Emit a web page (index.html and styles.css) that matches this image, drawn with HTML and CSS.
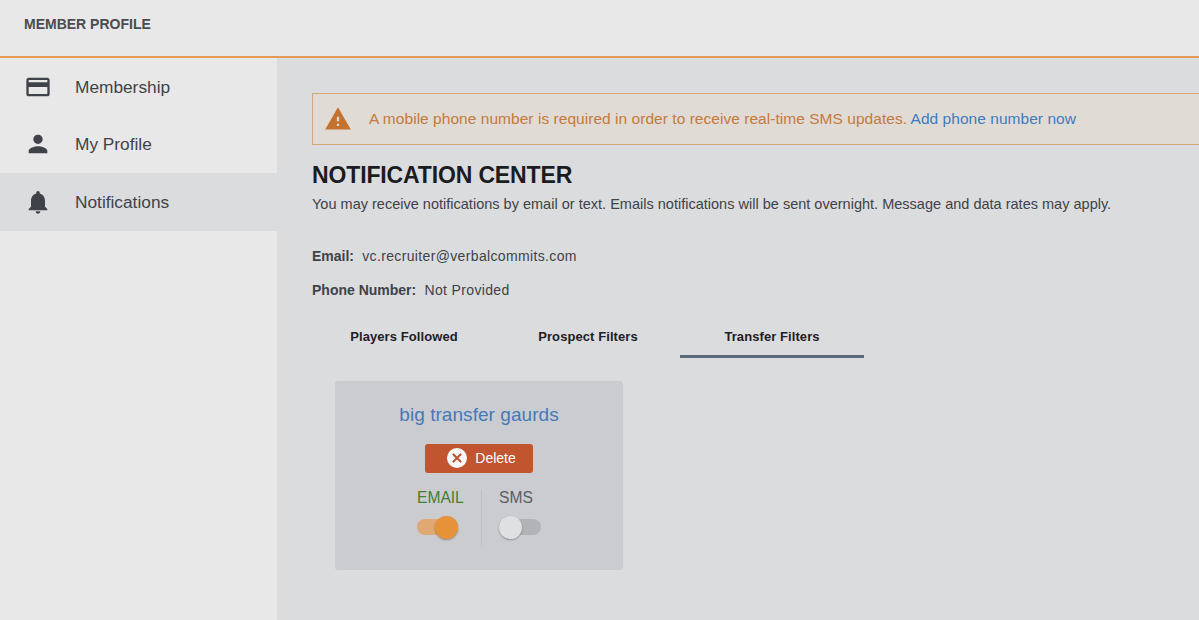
FILE: index.html
```html
<!DOCTYPE html>
<html lang="en">
<head>
  <meta charset="UTF-8">
  <title>Member Profile</title>
  <link rel="stylesheet" href="styles.css">
</head>
<body>
  <header class="topbar">MEMBER PROFILE</header>
  <div class="layout">
    <nav class="sidebar">
      <a class="nav-item">
        <svg class="nav-icon" viewBox="0 0 24 24"><path d="M20 4H4c-1.11 0-1.99.89-1.99 2L2 18c0 1.11.89 2 2 2h16c1.11 0 2-.89 2-2V6c0-1.11-.89-2-2-2zm0 14H4v-6h16v6zm0-10H4V6h16v2z"/></svg>
        <span class="nav-label">Membership</span>
      </a>
      <a class="nav-item">
        <svg class="nav-icon" viewBox="0 0 24 24"><path d="M12 12c2.21 0 4-1.79 4-4s-1.79-4-4-4-4 1.79-4 4 1.79 4 4 4zm0 2c-2.67 0-8 1.34-8 4v2h16v-2c0-2.66-5.33-4-8-4z"/></svg>
        <span class="nav-label">My Profile</span>
      </a>
      <a class="nav-item active">
        <svg class="nav-icon" viewBox="0 0 24 24"><path d="M12 22c1.1 0 2-.9 2-2h-4c0 1.1.9 2 2 2zm6-6v-5c0-3.07-1.63-5.64-4.5-6.32V4c0-.83-.67-1.5-1.5-1.5s-1.5.67-1.5 1.5v.68C7.64 5.36 6 7.92 6 11v5l-2 2v1h16v-1l-2-2z"/></svg>
        <span class="nav-label">Notifications</span>
      </a>
    </nav>

    <main class="content">
      <div class="alert">
        <svg class="alert-icon" viewBox="0 0 24 24"><path d="M1 21h22L12 2 1 21zm12-3h-2v-2h2v2zm0-4h-2v-4h2v4z"/></svg>
        <span>A mobile phone number is required in order to receive real-time SMS updates. <a class="link">Add phone number now</a></span>
      </div>

      <h1>NOTIFICATION CENTER</h1>
      <p class="intro">You may receive notifications by email or text. Emails notifications will be sent overnight. Message and data rates may apply.</p>

      <div class="contact"><strong>Email:</strong> vc.recruiter@verbalcommits.com</div>
      <div class="contact"><strong>Phone Number:</strong> Not Provided</div>

      <div class="tabs">
        <div class="tab">Players Followed</div>
        <div class="tab">Prospect Filters</div>
        <div class="tab selected">Transfer Filters</div>
      </div>

      <div class="card">
        <div class="card-title">big transfer gaurds</div>
        <button class="delete">
          <svg class="delete-icon" viewBox="0 0 20 20"><circle cx="10" cy="10" r="10" fill="#fff"/><path d="M6.5 6.5l7 7M13.5 6.5l-7 7" stroke="#c0532f" stroke-width="2.2" stroke-linecap="round"/></svg>
          Delete
        </button>
        <div class="channels">
          <div class="channel on">
            <span class="channel-label">EMAIL</span>
            <span class="switch"><span class="knob"></span></span>
          </div>
          <div class="channel">
            <span class="channel-label">SMS</span>
            <span class="switch"><span class="knob"></span></span>
          </div>
        </div>
      </div>
    </main>
  </div>
</body>
</html>
```

FILE: styles.css
```css
html, body {
  margin: 0;
  height: 100%;
  overflow: hidden;
}
body {
  font-family: "Liberation Sans", Arial, sans-serif;
  background: #dbdcde;
  color: #3f4247;
}
.topbar {
  height: 56px;
  background: #e8e8e8;
  border-bottom: 2px solid #e59a57;
  padding-left: 24px;
  line-height: 49px;
  font-size: 14px;
  font-weight: bold;
  color: #4a4c50;
}
.layout {
  display: flex;
  height: 562px;
}
.sidebar {
  width: 277px;
  flex-shrink: 0;
  background: #e8e8e8;
}
.nav-item {
  display: flex;
  align-items: center;
  height: 57.5px;
  padding-left: 24px;
  font-size: 17.3px;
  color: #3f4349;
}
.nav-item.active {
  background: #dbdcde;
}
.nav-icon {
  width: 28px;
  height: 28px;
  margin-right: 23px;
  fill: #3f4349;
}
.nav-label {
  padding-top: 1px;
}
.content {
  flex: 1;
  min-width: 0;
  padding: 35px 0 0 35px;
}
.alert {
  display: flex;
  align-items: center;
  width: 920px;
  height: 50px;
  border: 1px solid #d6a67c;
  background: #e0dbd5;
  color: #c47a3c;
  font-size: 15.5px;
  letter-spacing: 0.04px;
  white-space: nowrap;
}
.alert-icon {
  width: 28px;
  height: 28px;
  margin: 0 17px 0 11px;
  fill: #c4722f;
}
.link {
  color: #3f7cc0;
}
h1 {
  margin: 15px 0 0;
  font-size: 23px;
  line-height: 30px;
  color: #1b1c1f;
  letter-spacing: -0.14px;
}
.intro {
  margin: 4px 0 0;
  font-size: 14.5px;
  line-height: 20px;
  letter-spacing: 0.01px;
  white-space: nowrap;
}
.contact {
  font-size: 14px;
  line-height: 20px;
  letter-spacing: 0.35px;
  margin-top: 14px;
}
.intro + .contact {
  margin-top: 32px;
}
.contact strong {
  margin-right: 4px;
  letter-spacing: 0;
}
.tabs {
  display: flex;
  margin-top: 21px;
  width: 552px;
}
.tab {
  width: 184px;
  height: 37px;
  box-sizing: border-box;
  padding-top: 7px;
  text-align: center;
  font-size: 13px;
  line-height: 18px;
  font-weight: bold;
  letter-spacing: 0.08px;
  color: #1f2024;
}
.tab.selected {
  border-bottom: 3px solid #5b6b7c;
}
.card {
  width: 288px;
  height: 189px;
  margin: 23px 0 0 23px;
  padding-top: 22px;
  box-sizing: border-box;
  background: #cbccd0;
  border-radius: 3px;
  text-align: center;
}
.card-title {
  font-size: 19px;
  line-height: 24px;
  letter-spacing: 0.05px;
  color: #4579ba;
}
.delete {
  display: inline-flex;
  align-items: center;
  justify-content: center;
  width: 108px;
  height: 29px;
  margin-top: 17px;
  padding: 0 0 1px 5px;
  border: 0;
  border-radius: 3px;
  background: #c0552f;
  color: #fff;
  font-family: inherit;
  font-size: 14px;
}
.delete-icon {
  width: 20px;
  height: 20px;
  margin-right: 8px;
}
.channels {
  display: flex;
  justify-content: center;
  margin-top: 17px;
}
.channel {
  display: flex;
  flex-direction: column;
  align-items: flex-start;
  width: 64px;
  height: 57px;
}
.channel:last-child {
  width: 42px;
  padding-left: 17px;
  border-left: 1px solid #bfc0c4;
}
.channel-label {
  font-size: 15.6px;
  line-height: 16px;
  color: #5c5e63;
}
.channel.on .channel-label {
  color: #3f8035;
}
.switch {
  display: block;
  position: relative;
  width: 42px;
  height: 16px;
  margin-top: 13px;
  border-radius: 8px;
  background: #b2b3b7;
}
.knob {
  position: absolute;
  top: -3.5px;
  left: 0;
  width: 23px;
  height: 23px;
  border-radius: 50%;
  background: #dfe0e2;
  box-shadow: 0 1px 2px rgba(0,0,0,0.3);
}
.channel.on .switch {
  width: 41px;
  background: #e0a873;
}
.channel.on .knob {
  left: auto;
  right: 0;
  background: #e59238;
}
```
